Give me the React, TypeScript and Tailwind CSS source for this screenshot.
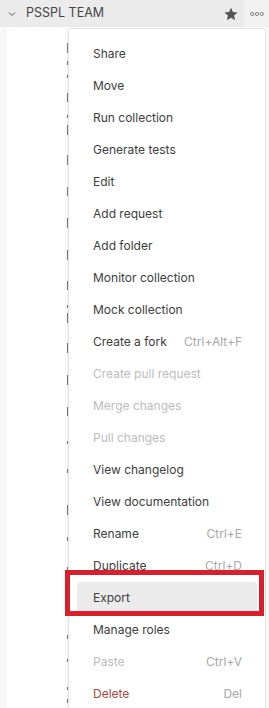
import React from 'react';

type Item = {
  label: string;
  shortcut?: string;
  disabled?: boolean;
  danger?: boolean;
  active?: boolean;
};

const items: Item[] = [
  { label: 'Share' },
  { label: 'Move' },
  { label: 'Run collection' },
  { label: 'Generate tests' },
  { label: 'Edit' },
  { label: 'Add request' },
  { label: 'Add folder' },
  { label: 'Monitor collection' },
  { label: 'Mock collection' },
  { label: 'Create a fork', shortcut: 'Ctrl+Alt+F' },
  { label: 'Create pull request', disabled: true },
  { label: 'Merge changes', disabled: true },
  { label: 'Pull changes', disabled: true },
  { label: 'View changelog' },
  { label: 'View documentation' },
  { label: 'Rename', shortcut: 'Ctrl+E' },
  { label: 'Duplicate', shortcut: 'Ctrl+D' },
  { label: 'Export', active: true },
  { label: 'Manage roles' },
  { label: 'Paste', shortcut: 'Ctrl+V', disabled: true },
  { label: 'Delete', shortcut: 'Del', danger: true },
];

// slivers of the tree rows that peek out from under the menu: [top, height]
const slivers: [number, number][] = [
  [6, 10], [24, 4], [38, 3], [56, 9], [78, 3], [88, 10], [118, 10], [150, 9],
  [181, 10], [213, 10], [244, 9], [268, 3], [276, 10], [306, 10], [338, 10],
  [370, 9], [404, 3], [432, 4], [468, 10], [500, 4], [530, 4], [598, 4], [622, 3], [650, 3], [662, 4],
];

export default function App() {
  return (
    <div className="relative h-[708px] w-[269px] overflow-hidden bg-white font-['Inter','Liberation_Sans',sans-serif] text-[12px] text-[#3d3d3d]">
      {/* Collection header */}
      <div className="flex h-[27px] items-center bg-[#ebebeb]">
        <svg className="ml-[8px] h-[8px] w-[8px]" viewBox="0 0 8 8" fill="none" stroke="#555" strokeWidth="1">
          <path d="M1 2.5 L4 5.5 L7 2.5" />
        </svg>
        <span className="ml-[10px] text-[12.5px] text-[#444]">PSSPL TEAM</span>
        <div className="ml-auto flex h-full items-center">
          <svg className="mr-[5px] h-[16px] w-[16px]" viewBox="0 0 24 24" fill="#555">
            <path d="M12 2.5l2.9 6.6 7.1.6-5.4 4.7 1.6 7-6.2-3.7-6.2 3.7 1.6-7L2 9.7l7.1-.6z" />
          </svg>
          <div className="flex h-full w-[25px] items-center justify-center bg-[#f2f2f2]">
            <svg className="h-[6px] w-[14px]" viewBox="0 0 14 6" fill="none" stroke="#777" strokeWidth="0.9">
              <circle cx="2.2" cy="3" r="1.6" />
              <circle cx="7" cy="3" r="1.6" />
              <circle cx="11.8" cy="3" r="1.6" />
            </svg>
          </div>
        </div>
      </div>

      {/* Tree under the menu */}
      <div className="flex h-[681px]">
        <div className="w-[7px] bg-[#f7f7f7]" />
        <div className="relative ml-[60px] w-[1px]">
          {slivers.map(([t, h], i) => (
            <div key={i} className="absolute left-0 w-[1px] bg-[#777]" style={{ top: t + 10, height: h }} />
          ))}
        </div>
      </div>

      {/* Context menu */}
      <div className="absolute left-[68px] top-[28px] w-[198px] rounded-[3px] border border-[#e3e3e3] bg-white px-[8px] pt-[9px] shadow-[0_2px_6px_rgba(0,0,0,0.08)]">
        {items.map((it) => (
          <div
            key={it.label}
            className={`flex h-[32px] items-center justify-between rounded-[4px] pl-[16px] pr-[15px] ${it.active ? 'bg-[#ebebeb]' : ''}`}
          >
            <span className={it.danger ? 'text-[#aa4840]' : it.disabled ? 'text-[#bcbcbc]' : 'text-[#3d3d3d]'}>
              {it.label}
            </span>
            {it.shortcut && <span className="text-[#a8a8a8]">{it.shortcut}</span>}
          </div>
        ))}
      </div>
      <div className="absolute right-0 top-[27px] h-[681px] w-[3px] bg-[#f7f7f7]" />

      {/* annotation box */}
      <div className="absolute left-[65px] top-[570px] h-[46px] w-[199px] border-[5px] border-[#d7202b]" />
    </div>
  );
}
